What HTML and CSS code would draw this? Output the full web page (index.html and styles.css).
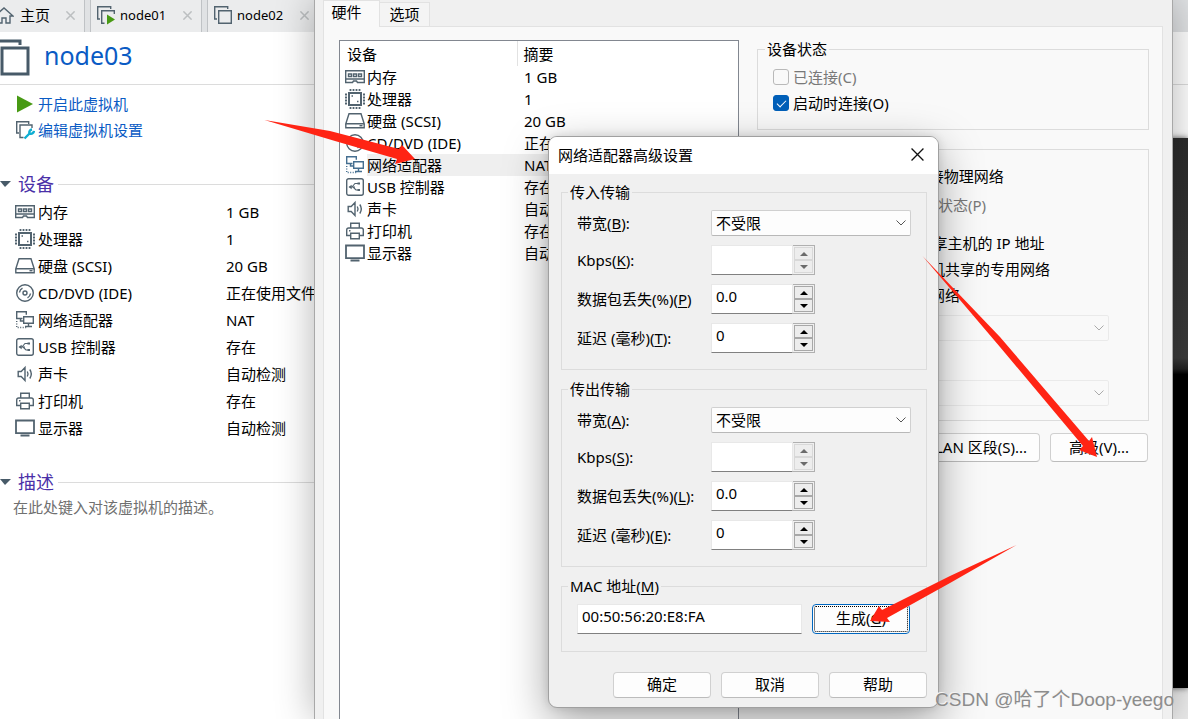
FILE: index.html
```html
<!DOCTYPE html>
<html lang="zh-CN">
<head>
<meta charset="utf-8">
<title>node03</title>
<link rel="stylesheet" href="styles.css">
</head>
<body>
<svg class="sprite" aria-hidden="true">
  <symbol id="memory" viewBox="0 0 20 20"><path d="M.700 3.700h18.600v11.800h-6.800l-1-1.500h-3l-1 1.500H.700z M1 12h18"/><path d="M3.500 7h3v2.500h-3z M8.500 7h3v2.500h-3z M13.500 7h3v2.500h-3z"/></symbol>
  <symbol id="cpu" viewBox="0 0 20 20"><path stroke-width="2" d="M4 4h12v12H4z"/><path stroke-width="1.800" d="M5.500 0v2 M8.500 0v2 M11.500 0v2 M14.500 0v2 M5.500 18v2 M8.500 18v2 M11.500 18v2 M14.500 18v2 M0 5.500h2 M0 8.500h2 M0 11.500h2 M0 14.500h2 M18 5.500h2 M18 8.500h2 M18 11.500h2 M18 14.500h2"/><path d="M6.500 7h1.500 M12 12.500h1.500"/></symbol>
  <symbol id="disk" viewBox="0 0 20 20"><path d="M4 2.700h12l3.200 10H.8z M.8 12.700v4h18.400v-4"/><path d="M14.500 14.700h3"/></symbol>
  <symbol id="disc" viewBox="0 0 20 20"><circle cx="10" cy="10" r="8.300"/><circle cx="10" cy="10" r="2"/><path d="M4.500 9.500a5.500 5.500 0 0 1 3-4.300 M15.500 10.500a5.500 5.500 0 0 1-3 4.300"/></symbol>
  <symbol id="network" viewBox="0 0 20 20"><path d="M7.500 8.500H1.700V1.700h9.600v3"/><path d="M8.700 6.700h9.600v6.600H8.700z M13.500 13.300v3 M10 16.500h7 M5.500 8.500v2.500h3"/><path stroke-dasharray="1 1.500" d="M1.700 11v6.500h10"/></symbol>
  <symbol id="usb" viewBox="0 0 20 20"><rect x="1.700" y="1.700" width="16.600" height="16.600" rx="2"/><path stroke-width="1.100" d="M4.500 10H10 M7 10l3-3.500h3 M8 10l3 3h2"/><path class="fill" d="M3.500 10l3.200-2.200v4.400z M12.500 5.500h2.500v2h-2.500z M12.500 12H15v2h-2.500z"/></symbol>
  <symbol id="sound" viewBox="0 0 20 20"><path d="M3.200 7.500h3l3.800-4v13l-3.800-4h-3z M12.300 7.500q1.500 2.500 0 5 M14.800 5.500q3 4.500 0 9"/></symbol>
  <symbol id="printer" viewBox="0 0 20 20"><path d="M5.700 7V2.200h8.600V7 M5.500 14.500H1.700V9q0-2 2-2h12.600q2 0 2 2v5.500h-3.800"/><path d="M5.700 12.200h8.600v5.500H5.700z M4 9.700h1.500"/></symbol>
  <symbol id="display" viewBox="0 0 20 20"><path stroke-width="1.800" d="M1 2.500h18v12.700H1z M5.500 17.500h9"/></symbol>
  <symbol id="vm" viewBox="0 0 20 20"><path d="M4 14H1.700V1.700h13V4"/><path d="M5.700 5.700h12.600v12.600H5.700z"/></symbol>
  <symbol id="vm-on" viewBox="0 0 20 20"><path d="M4 14H1.700V1.700h13V4 M8.500 18.300H5.700V5.700h12.600V9"/><path class="play" d="M11 9.500v10l8-5z"/></symbol>
  <symbol id="vm-edit" viewBox="0 0 20 20"><path d="M4 13H1.700V1.700h12V4 M8.500 17.500H5V5h12v3"/><path class="wrench" d="M9.500 18.500l5.500-5.500 M14.500 13.500a3 3 0 0 1 2.500-4 M15 13.500a3 3 0 0 0 4-2.500"/></symbol>
  <symbol id="home" viewBox="0 0 20 20"><path d="M1 11l9-8 9 8h-3v7h-4v-5H8v5H4v-7z"/></symbol>
  <symbol id="cross" viewBox="0 0 12 12"><path d="M.5.500l11 11M11.500.500l-11 11"/></symbol>
  <symbol id="chevron" viewBox="0 0 10 6"><path d="M.5.500L5 5 9.500.500"/></symbol>
</svg>

<div class="workspace">
  <nav class="vm-tabs">
    <div class="vm-tab tab-home"><svg class="icon"><use href="#home"/></svg><span>主页</span><button class="tab-close" aria-label="关闭主页"><svg><use href="#cross"/></svg></button></div>
    <div class="vm-tab"><svg class="icon"><use href="#vm-on"/></svg><span>node01</span><button class="tab-close" aria-label="关闭 node01"><svg><use href="#cross"/></svg></button></div>
    <div class="vm-tab"><svg class="icon"><use href="#vm"/></svg><span>node02</span><button class="tab-close" aria-label="关闭 node02"><svg><use href="#cross"/></svg></button></div>
  </nav>
  <header class="vm-header">
    <svg class="vm-logo" viewBox="0 0 30 38"><path d="M0 2h20v4M2 9h26v26H2z"/></svg>
    <h1>node03</h1>
  </header>
  <div class="vm-body">
    <main class="vm-summary">
      <div class="actions">
        <a href="#start"><svg class="icon" viewBox="0 0 20 20"><path class="play" d="M2 1.500v17l16-8.500z"/></svg>开启此虚拟机</a>
        <a href="#edit"><svg class="icon"><use href="#vm-edit"/></svg>编辑虚拟机设置</a>
      </div>
      <h2>设备</h2>
      <table class="summary-table">
        <tr><td class="ic"><svg class="icon"><use href="#memory"/></svg></td><td class="name">内存</td><td>1 GB</td></tr>
        <tr><td class="ic"><svg class="icon"><use href="#cpu"/></svg></td><td class="name">处理器</td><td>1</td></tr>
        <tr><td class="ic"><svg class="icon"><use href="#disk"/></svg></td><td class="name">硬盘 (SCSI)</td><td>20 GB</td></tr>
        <tr><td class="ic"><svg class="icon"><use href="#disc"/></svg></td><td class="name">CD/DVD (IDE)</td><td>正在使用文件</td></tr>
        <tr><td class="ic"><svg class="icon"><use href="#network"/></svg></td><td class="name">网络适配器</td><td>NAT</td></tr>
        <tr><td class="ic"><svg class="icon"><use href="#usb"/></svg></td><td class="name">USB 控制器</td><td>存在</td></tr>
        <tr><td class="ic"><svg class="icon"><use href="#sound"/></svg></td><td class="name">声卡</td><td>自动检测</td></tr>
        <tr><td class="ic"><svg class="icon"><use href="#printer"/></svg></td><td class="name">打印机</td><td>存在</td></tr>
        <tr><td class="ic"><svg class="icon"><use href="#display"/></svg></td><td class="name">显示器</td><td>自动检测</td></tr>
      </table>
      <h2>描述</h2>
      <p class="description">在此处键入对该虚拟机的描述。</p>
    </main>
    <aside class="console"></aside>
  </div>
</div>

<section class="settings">
  <div class="tabs" role="tablist">
    <button class="tab active" role="tab">硬件</button>
    <button class="tab" role="tab">选项</button>
  </div>
  <div class="panel">
    <div class="device-list">
      <table>
        <thead><tr><th colspan="2">设备</th><th class="summary">摘要</th></tr></thead>
        <tbody>
          <tr><td class="ic"><svg class="icon"><use href="#memory"/></svg></td><td>内存</td><td class="summary">1 GB</td></tr>
          <tr><td class="ic"><svg class="icon"><use href="#cpu"/></svg></td><td>处理器</td><td class="summary">1</td></tr>
          <tr><td class="ic"><svg class="icon"><use href="#disk"/></svg></td><td>硬盘 (SCSI)</td><td class="summary">20 GB</td></tr>
          <tr><td class="ic"><svg class="icon"><use href="#disc"/></svg></td><td>CD/DVD (IDE)</td><td class="summary">正在使用文件</td></tr>
          <tr class="selected"><td class="ic"><svg class="icon"><use href="#network"/></svg></td><td>网络适配器</td><td class="summary">NAT</td></tr>
          <tr><td class="ic"><svg class="icon"><use href="#usb"/></svg></td><td>USB 控制器</td><td class="summary">存在</td></tr>
          <tr><td class="ic"><svg class="icon"><use href="#sound"/></svg></td><td>声卡</td><td class="summary">自动检测</td></tr>
          <tr><td class="ic"><svg class="icon"><use href="#printer"/></svg></td><td>打印机</td><td class="summary">存在</td></tr>
          <tr><td class="ic"><svg class="icon"><use href="#display"/></svg></td><td>显示器</td><td class="summary">自动检测</td></tr>
        </tbody>
      </table>
    </div>
    <div class="options">
      <fieldset class="group status">
        <legend>设备状态</legend>
        <label class="check disabled"><input type="checkbox" disabled>已连接(C)</label>
        <label class="check"><input type="checkbox" checked>启动时连接(O)</label>
      </fieldset>
      <fieldset class="group connection">
        <legend>网络连接</legend>
        <label class="radio"><input type="radio" name="net">桥接模式(B): 直接连接物理网络</label>
        <label class="radio nested disabled"><input type="checkbox" disabled>复制物理网络连接状态(P)</label>
        <label class="radio"><input type="radio" name="net" checked>NAT 模式(N): 用于共享主机的 IP 地址</label>
        <label class="radio"><input type="radio" name="net">仅主机模式(H): 与主机共享的专用网络</label>
        <label class="radio"><input type="radio" name="net">自定义(U): 特定虚拟网络</label>
        <div class="select wide"><select disabled aria-label="虚拟网络"><option></option></select><svg><use href="#chevron"/></svg></div>
        <label class="radio segment"><input type="radio" name="net">LAN 区段(L):</label>
        <div class="select wide"><select disabled aria-label="LAN 区段"><option></option></select><svg><use href="#chevron"/></svg></div>
      </fieldset>
      <div class="option-buttons">
        <button class="btn lan">LAN 区段(S)...</button>
        <button class="btn">高级(V)...</button>
      </div>
    </div>
  </div>
</section>

<section class="dialog" role="dialog" aria-labelledby="dialog-title">
  <div class="titlebar"><h3 id="dialog-title">网络适配器高级设置</h3><button class="close" aria-label="关闭"><svg><use href="#cross"/></svg></button></div>
  <form class="dialog-body">
    <fieldset class="group">
      <legend>传入传输</legend>
      <div class="grid">
        <label for="in-bw">带宽(<u>B</u>):</label>
        <div class="select"><select id="in-bw"><option>不受限</option></select><svg><use href="#chevron"/></svg></div>
        <label for="in-kbps">Kbps(<u>K</u>):</label>
        <div class="spin"><input id="in-kbps" type="text" disabled><div class="arrows"><button type="button" disabled aria-label="增加"><i class="up"></i></button><button type="button" disabled aria-label="减少"><i class="down"></i></button></div></div>
        <label for="in-loss">数据包丢失(%)(<u>P</u>)</label>
        <div class="spin"><input id="in-loss" type="text" value="0.0"><div class="arrows"><button type="button" aria-label="增加"><i class="up"></i></button><button type="button" aria-label="减少"><i class="down"></i></button></div></div>
        <label for="in-delay">延迟 (毫秒)(<u>T</u>):</label>
        <div class="spin"><input id="in-delay" type="text" value="0"><div class="arrows"><button type="button" aria-label="增加"><i class="up"></i></button><button type="button" aria-label="减少"><i class="down"></i></button></div></div>
      </div>
    </fieldset>
    <fieldset class="group">
      <legend>传出传输</legend>
      <div class="grid">
        <label for="out-bw">带宽(<u>A</u>):</label>
        <div class="select"><select id="out-bw"><option>不受限</option></select><svg><use href="#chevron"/></svg></div>
        <label for="out-kbps">Kbps(<u>S</u>):</label>
        <div class="spin"><input id="out-kbps" type="text" disabled><div class="arrows"><button type="button" disabled aria-label="增加"><i class="up"></i></button><button type="button" disabled aria-label="减少"><i class="down"></i></button></div></div>
        <label for="out-loss">数据包丢失(%)(<u>L</u>):</label>
        <div class="spin"><input id="out-loss" type="text" value="0.0"><div class="arrows"><button type="button" aria-label="增加"><i class="up"></i></button><button type="button" aria-label="减少"><i class="down"></i></button></div></div>
        <label for="out-delay">延迟 (毫秒)(<u>E</u>):</label>
        <div class="spin"><input id="out-delay" type="text" value="0"><div class="arrows"><button type="button" aria-label="增加"><i class="up"></i></button><button type="button" aria-label="减少"><i class="down"></i></button></div></div>
      </div>
    </fieldset>
    <fieldset class="group">
      <legend><label for="mac">MAC 地址(<u>M</u>)</label></legend>
      <div class="mac-row">
        <input id="mac" type="text" value="00:50:56:20:E8:FA">
        <button type="button" class="btn focused">生成(<u>G</u>)</button>
      </div>
    </fieldset>
    <div class="dialog-buttons">
      <button type="button" class="btn">确定</button>
      <button type="button" class="btn">取消</button>
      <button type="button" class="btn">帮助</button>
    </div>
  </form>
</section>

<svg class="pointers" width="1188" height="719" viewBox="0 0 1188 719" aria-hidden="true">
  <path d="M264.500 120L330 131L399 149L402 145L415 159L395 164L397 159L335 141z"/>
  <path d="M922.500 256L1000 337L1089 441L1092 437L1097 457L1079 450L1083 446L1000 347z"/>
  <path d="M1016.500 545L950 576L882 610L879 606L870 621L890 622L887 618L950 583z"/>
</svg>
<div class="watermark">CSDN @哈了个Doop-yeego</div>
</body>
</html>
```
FILE: styles.css
```css
* { box-sizing: border-box; }
html, body { height: 100%; }
body {
  margin: 0;
  overflow: hidden;
  position: relative;
  background: #fff;
  color: #000;
  font: 15px/20px "Noto Sans", "Noto Sans CJK SC", sans-serif;
}
button, input, select { font: inherit; color: inherit; margin: 0; }
h1, h2, h3, p { margin: 0; font-weight: 400; }
table { border-collapse: collapse; }
td, th { padding: 0; font-weight: 400; text-align: left; white-space: nowrap; }
svg { fill: none; stroke: #52636f; stroke-width: 1.4; display: block; }
.sprite { position: absolute; width: 0; height: 0; }
.icon { width: 20px; height: 20px; flex: none; }
.play { fill: #489a14; stroke: none; }
.fill { fill: #52636f; stroke: none; }
.wrench { stroke: #10aed2; stroke-width: 2.4; }

/* Main window */
.workspace { display: flex; flex-direction: column; height: 100%; }
.vm-tabs { display: flex; gap: 5px; height: 32px; background: #e0e2e4; }
.vm-tab {
  display: flex;
  align-items: center;
  width: 112px;
  padding: 0 9px 2px 5px;
  background: #ebeced;
  border: solid #bfc2c5;
  border-width: 0 1px;
  font-size: 13px;
}
.vm-tab span { margin-left: 4px; }
.tab-home { width: 85px; padding-left: 0; border-left: 0; font-size: 15px; }
.tab-home .icon { margin-left: -6px; }
.tab-home span { margin-left: 6px; }
.tab-close { margin-left: auto; padding: 0; border: 0; background: none; }
.tab-close svg { width: 9px; height: 9px; stroke: #bcbfc1; stroke-width: 2; }
.vm-header {
  display: flex;
  align-items: center;
  gap: 14px;
  height: 53px;
  border-bottom: 1px solid #dcdcdc;
  color: #0a5bc4;
}
.vm-header h1 { padding-bottom: 6px; font-size: 25px; line-height: 32px; }
.vm-logo { width: 30px; height: 38px; stroke: #475a68; stroke-width: 3; }
.vm-body { display: flex; flex: 1; min-height: 0; }
.vm-summary { flex: 1; padding-top: 6px; }
.actions { padding: 0 15px; }
.actions a {
  display: flex;
  align-items: center;
  gap: 3px;
  height: 26px;
  color: #0a5bc4;
  text-decoration: none;
}
.vm-summary h2 {
  display: flex;
  align-items: center;
  gap: 4px;
  margin-top: 28px;
  margin-bottom: 1px;
  font-size: 18px;
  line-height: 26px;
  color: #4a30a8;
}
.vm-summary h2::before {
  content: "";
  margin-right: 3px;
  border: solid transparent;
  border-width: 6px 6px 0 5px;
  border-top-color: #475a68;
}
.vm-summary h2::after { content: ""; flex: 1; height: 1px; background: #dcdcdc; }
.summary-table { margin: 0 15px; }
.summary-table td { height: 27px; }
.ic { width: 23px; }
.summary-table .name { width: 188px; }
.description { padding-left: 13px; color: #707070; line-height: 22px; }
.console {
  width: 400px;
  margin: 53px 0 31px;
  background: linear-gradient(#2c2c2c, #3c3c3c 40%, #222 42%, #000 43%);
  box-shadow: 0 0 6px #555, 0 31px 0 #ececec;
}

/* Settings window */
.settings {
  position: absolute;
  inset: 0 15px 0 314px;
  display: flex;
  flex-direction: column;
  padding: 0 9px 0 8px;
  background: #f0f0f0;
  border: solid #a8a8a8;
  border-width: 0 1px;
  box-shadow: 0 0 36px rgba(0, 0, 0, .3);
}
.tabs { display: flex; align-items: flex-end; height: 26px; flex: none; }
.tab {
  height: 24px;
  width: 50px;
  padding: 0 0 2px;
  border: 1px solid #e2e2e2;
  border-width: 1px 1px 0 0;
  background: #f4f4f4;
}
.tab.active {
  width: 57px;
  height: 27px;
  margin-bottom: -1px;
  padding: 0 10px 5px 0;
  border-left-width: 1px;
  background: #f9f9f9;
  z-index: 1;
}
.panel {
  display: flex;
  flex: 1;
  gap: 18px;
  min-height: 0;
  padding: 13px 13px 0 15px;
  border: solid #e2e2e2;
  border-width: 1px 1px 0;
  background: #f9f9f9;
}
.device-list { width: 400px; flex: none; border: 1px solid #828790; border-bottom: 0; background: #fff; padding: 0 1px 0 5px; }
.device-list table { width: 100%; }
.device-list th { height: 25px; padding-left: 2px; }
.device-list td { height: 22px; }
.device-list .ic { width: 22px; }
.device-list .ic .icon { margin: -1px 0; }
.device-list .summary { width: 214px; padding: 0; }
.device-list th.summary { padding-left: 6px; width: 220px; border-left: 1px solid #e2e2e2; }
.device-list td.summary { padding-left: 7px; }
.selected td:not(.ic) { background: #efefef; }
.selected svg { stroke: #456f91; }
.options { flex: 1; min-width: 0; }
.group { margin: 0; min-width: 0; border: 1px solid #dcdcdc; }
.group legend { padding: 0 2px; height: 20px; margin: 0; white-space: nowrap; }
.status { height: 91px; padding: 5px 7px; margin-top: -1px; }
.check, .radio { display: flex; align-items: center; height: 26px; padding-left: 8px; white-space: nowrap; }
.check input, .radio input { width: 16px; height: 16px; margin-right: 4px; accent-color: #005fb8; }
.check input {
  appearance: none;
  border: 1px solid #b9b9b9;
  border-radius: 3px;
  display: grid;
  place-items: center;
}
.check input:checked { background: #005fb8; border-color: #005fb8; }
.check input:checked::before {
  content: "";
  width: 8px;
  height: 4px;
  margin-bottom: 2px;
  border: solid #fff;
  border-width: 0 0 1px 1px;
  rotate: -45deg;
}
.disabled { color: #787878; }
.connection { height: 282px; margin-top: 9px; padding: 4px 7px 0; }
.radio { padding-left: 15px; }
.radio input { margin-right: 1px; }
.nested { padding-left: 36px; margin: 3px 0 12px; }
.segment { margin: 6px 0; }
.select { position: relative; }
.select select {
  appearance: none;
  display: block;
  width: 100%;
  height: 26px;
  padding: 0 4px;
  border: 1px solid #d0d0d0;
  border-bottom-color: #b8b8b8;
  border-radius: 2px;
  background: #fdfdfd;
}
.select svg { position: absolute; right: 5px; top: 10px; width: 10px; height: 6px; stroke: #555; stroke-width: 1; }
.wide { margin: 7px 32px 0 32px; }
.wide select { border-color: #e5e5e5; background: #fafafa; }
.wide svg { stroke: #aaa; }
.option-buttons { display: flex; justify-content: flex-end; gap: 10px; padding: 12px 1px; }
.btn {
  width: 98px;
  height: 26px;
  padding: 0 0 2px;
  border: 1px solid #d0d0d0;
  border-bottom-color: #bcbcbc;
  border-radius: 4px;
  background: #fdfdfd;
  white-space: nowrap;
}
.option-buttons .btn { height: 29px; }
.option-buttons .lan { width: 118px; }

/* Advanced dialog */
.dialog {
  position: absolute;
  left: 548px;
  top: 136px;
  width: 391px;
  border: 1px solid #a0a0a0;
  border-radius: 9px;
  background: #f0f0f0;
  box-shadow: 0 14px 44px rgba(0, 0, 0, .36), 0 0 10px rgba(0, 0, 0, .12);
  overflow: hidden;
}
.titlebar { display: flex; justify-content: space-between; align-items: center; height: 37px; padding: 0 14px 2px 9px; background: #fff; }
.titlebar h3 { font-size: 15px; }
.close { padding: 0; border: 0; background: none; }
.close svg { width: 13px; height: 13px; stroke: #111; stroke-width: 1.2; }
.dialog-body { display: flex; flex-direction: column; gap: 9px; padding: 8px 11px 9px 12px; }
.dialog .group { padding: 0 6px; }
.grid { display: grid; grid-template-columns: 134px 1fr; gap: 9px 0; align-items: center; padding: 8px 9px 16px; }
.grid label { white-space: nowrap; }
u { text-underline-offset: 2px; }
.spin { display: flex; width: 104px; height: 30px; }
.spin input, .mac-row input {
  flex: 1;
  min-width: 0;
  padding: 0 4px 6px;
  border: 1px solid #e8e8e8;
  border-bottom-color: #808080;
  border-radius: 0;
  background: #fff;
}
.arrows { width: 22px; padding: 1px; border: 1px solid #b0b0b0; border-left: 0; display: flex; flex-direction: column; }
.arrows button { flex: 1; display: grid; place-items: center; padding: 0; border: 1px solid #a8a8a8; background: #ededed; }
.arrows button:disabled { border-color: #d8d8d8; }
.arrows i { border: solid transparent; }
.arrows .up { border-width: 0 4px 4px; border-bottom-color: #000; }
.arrows .down { border-width: 4px 4px 0; border-top-color: #000; }
button:disabled i { opacity: .55; }
.mac-row { display: flex; gap: 10px; padding: 8px 10px 17px 9px; }
.mac-row .btn, .mac-row input { height: 30px; }
.focused { border-color: #0067c0; outline: 1px dotted #000; outline-offset: -3px; }
.dialog-buttons { display: flex; justify-content: flex-end; gap: 10px; padding-top: 11px; }

.pointers { position: absolute; left: 0; top: 0; pointer-events: none; }
.pointers path { fill: #ff2414; stroke: none; }
.watermark {
  position: absolute;
  right: 14px;
  bottom: 7px;
  font: 19px/24px "Liberation Sans", "Noto Sans CJK SC", sans-serif;
  color: #8c8c8c;
  text-shadow: -1px -1px 0 #f4f4f4;
  white-space: nowrap;
}
```
